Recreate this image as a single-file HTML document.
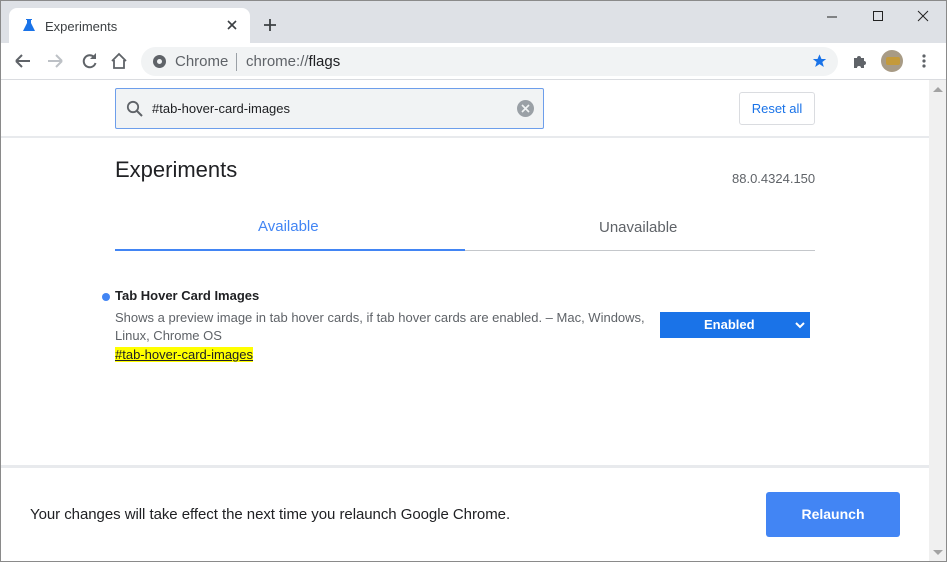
<!DOCTYPE html>
<html><head><style>
*{margin:0;padding:0;box-sizing:border-box}
body{width:947px;height:562px;overflow:hidden;font-family:"Liberation Sans",Arial,sans-serif;background:#fff;position:relative}
.win{position:absolute;left:0;top:0;width:947px;height:562px;border:1px solid #8a8a8a}
.tabbar{position:absolute;left:0;top:0;width:947px;height:43px;background:#dee1e6}
.tab{position:absolute;left:9px;top:8px;width:241px;height:35px;background:#fff;border-radius:8px 8px 0 0}
.abs{position:absolute}
.toolbar{position:absolute;left:0;top:43px;width:947px;height:37px;background:#fff;border-bottom:1px solid #dadce0}
.omni{position:absolute;left:141px;top:47px;width:697px;height:29px;background:#f1f3f4;border-radius:15px}
.scroll{position:absolute;left:929px;top:80px;width:17px;height:481px;background:#f0f0f0}
</style></head><body>
<div class="tabbar"></div>
<div class="tab"></div>
<svg class="abs" style="left:22px;top:18px" width="14" height="14" viewBox="0 0 14 14"><path d="M4 1h6v1H9v3l4 8H1l4-8V2H4z" fill="#1a73e8"/></svg>
<div class="abs" style="left:45px;top:19px;font-size:13px;color:#3c4043">Experiments</div>
<svg class="abs" style="left:227px;top:20px" width="10" height="10"><path d="M1 1l8 8M9 1l-8 8" stroke="#3c4043" stroke-width="1.6"/></svg>
<svg class="abs" style="left:263px;top:18px" width="14" height="14"><path d="M7 1v12M1 7h12" stroke="#3c4043" stroke-width="1.8"/></svg>
<svg class="abs" style="left:826px;top:10px" width="120" height="14"><path d="M1 7h10" stroke="#222" stroke-width="1"/><path d="M47.5 1.5h9v9h-9z" fill="none" stroke="#222"/><path d="M92 1l10 10M102 1l-10 10" stroke="#222"/></svg>
<div class="toolbar"></div>
<svg class="abs" style="left:14px;top:52px" width="120" height="18"><path d="M2 9h14M2 9l6-6M2 9l6 6" stroke="#5f6368" stroke-width="2" fill="none"/><path d="M48 9h-14M48 9l-6-6M48 9l-6 6" stroke="#bdc1c6" stroke-width="2" fill="none"/><path d="M80 5a6 6 0 1 0 1.5 6" stroke="#5f6368" stroke-width="2" fill="none"/><path d="M82 1v6h-6z" fill="#5f6368"/><path d="M98 9l7-7 7 7M100 8v8h10V8" stroke="#5f6368" stroke-width="1.8" fill="none"/></svg>
<div class="omni"></div>
<div class="abs" style="left:153px;top:55px;width:13px;height:13px;border-radius:50%;background:#5f6368"></div>
<div class="abs" style="left:157px;top:59px;width:5px;height:5px;border-radius:50%;background:#f1f3f4"></div>
<div class="abs" style="left:175px;top:53px;font-size:15px;color:#5f6368">Chrome</div>
<div class="abs" style="left:236px;top:53px;width:1px;height:18px;background:#9aa0a6"></div>
<div class="abs" style="left:246px;top:53px;font-size:15px;color:#5f6368">chrome://<span style="color:#202124">flags</span></div>
<svg class="abs" style="left:811px;top:53px" width="17" height="16" viewBox="0 0 24 24"><path d="M12 2l3 7h7l-5.7 4.5L18.5 21 12 16.6 5.5 21l2.2-7.5L2 9h7z" fill="#1a73e8"/></svg>
<svg class="abs" style="left:852px;top:53px" width="16" height="16"><path d="M2 5h3a2 2 0 1 1 4 0h3v3a2 2 0 1 1 0 4v3H9a2 2 0 1 0-4 0H2z" fill="#5f6368"/></svg>
<div class="abs" style="left:881px;top:50px;width:22px;height:22px;border-radius:50%;background:#a89b85"></div>
<div class="abs" style="left:886px;top:57px;width:14px;height:8px;background:#c49a3a;border-radius:2px"></div>
<svg class="abs" style="left:922px;top:53px" width="4" height="16"><circle cx="2" cy="3" r="1.6" fill="#5f6368"/><circle cx="2" cy="8" r="1.6" fill="#5f6368"/><circle cx="2" cy="13" r="1.6" fill="#5f6368"/></svg>

<div class="abs" style="left:1px;top:136px;width:928px;height:2px;background:#e8eaed"></div>
<div class="abs" style="left:115px;top:88px;width:429px;height:41px;background:#f1f3f4;border:1px solid #6d9eeb;border-radius:2px"></div>
<svg class="abs" style="left:126px;top:100px" width="18" height="18"><circle cx="7" cy="7" r="5.2" stroke="#5f6368" stroke-width="1.8" fill="none"/><path d="M11 11l5 5" stroke="#5f6368" stroke-width="2"/></svg>
<div class="abs" style="left:152px;top:101px;font-size:13px;color:#202124">#tab-hover-card-images</div>
<div class="abs" style="left:517px;top:100px;width:17px;height:17px;border-radius:50%;background:#9aa0a6"></div>
<svg class="abs" style="left:521px;top:104px" width="9" height="9"><path d="M1 1l7 7M8 1l-7 7" stroke="#f1f3f4" stroke-width="1.6"/></svg>
<div class="abs" style="left:739px;top:92px;width:76px;height:33px;border:1px solid #dadce0;border-radius:3px;font-size:13px;color:#1a73e8;text-align:center;line-height:31px">Reset all</div>

<div class="abs" style="left:115px;top:157px;font-size:22px;color:#202124">Experiments</div>
<div class="abs" style="left:732px;top:171px;font-size:13px;color:#5f6368">88.0.4324.150</div>
<div class="abs" style="left:258px;top:218px;font-size:15px;color:#4285f4">Available</div>
<div class="abs" style="left:599px;top:219px;font-size:15px;color:#5f6368">Unavailable</div>
<div class="abs" style="left:115px;top:250px;width:700px;height:1px;background:#c4c7cb"></div>
<div class="abs" style="left:115px;top:249px;width:350px;height:2px;background:#4285f4"></div>

<div class="abs" style="left:102px;top:293px;width:8px;height:8px;border-radius:50%;background:#4285f4"></div>
<div class="abs" style="left:115px;top:288px;font-size:13px;color:#202124;font-weight:bold">Tab Hover Card Images</div>
<div class="abs" style="left:115px;top:309px;width:530px;font-size:13px;color:#5f6368;line-height:18px">Shows a preview image in tab hover cards, if tab hover cards are enabled. – Mac, Windows, Linux, Chrome OS</div>
<div class="abs" style="left:115px;top:347px;font-size:13px;color:#202124;background:#ffff00;text-decoration:underline;line-height:15px">#tab-hover-card-images</div>
<div class="abs" style="left:660px;top:312px;width:150px;height:26px;background:#1a73e8;color:#fff;font-size:13px;font-weight:bold;line-height:26px;padding-left:44px">Enabled</div>
<svg class="abs" style="left:795px;top:322px" width="10" height="7"><path d="M1 1l4 4 4-4" stroke="#fff" stroke-width="2" fill="none"/></svg>

<div class="abs" style="left:1px;top:465px;width:928px;height:3px;background:#e8eaed"></div>
<div class="abs" style="left:30px;top:506px;font-size:15px;letter-spacing:-0.05px;color:#202124">Your changes will take effect the next time you relaunch Google Chrome.</div>
<div class="abs" style="left:766px;top:492px;width:134px;height:45px;background:#4285f4;border-radius:3px;color:#fff;font-size:14px;font-weight:bold;text-align:center;line-height:45px">Relaunch</div>

<div class="scroll"></div>
<svg class="abs" style="left:933px;top:86px" width="10" height="6"><path d="M0 6l5-5 5 5z" fill="#a3a3a3"/></svg>
<svg class="abs" style="left:933px;top:550px" width="10" height="6"><path d="M0 0l5 5 5-5z" fill="#a3a3a3"/></svg>
<div class="win"></div>
</body></html>
